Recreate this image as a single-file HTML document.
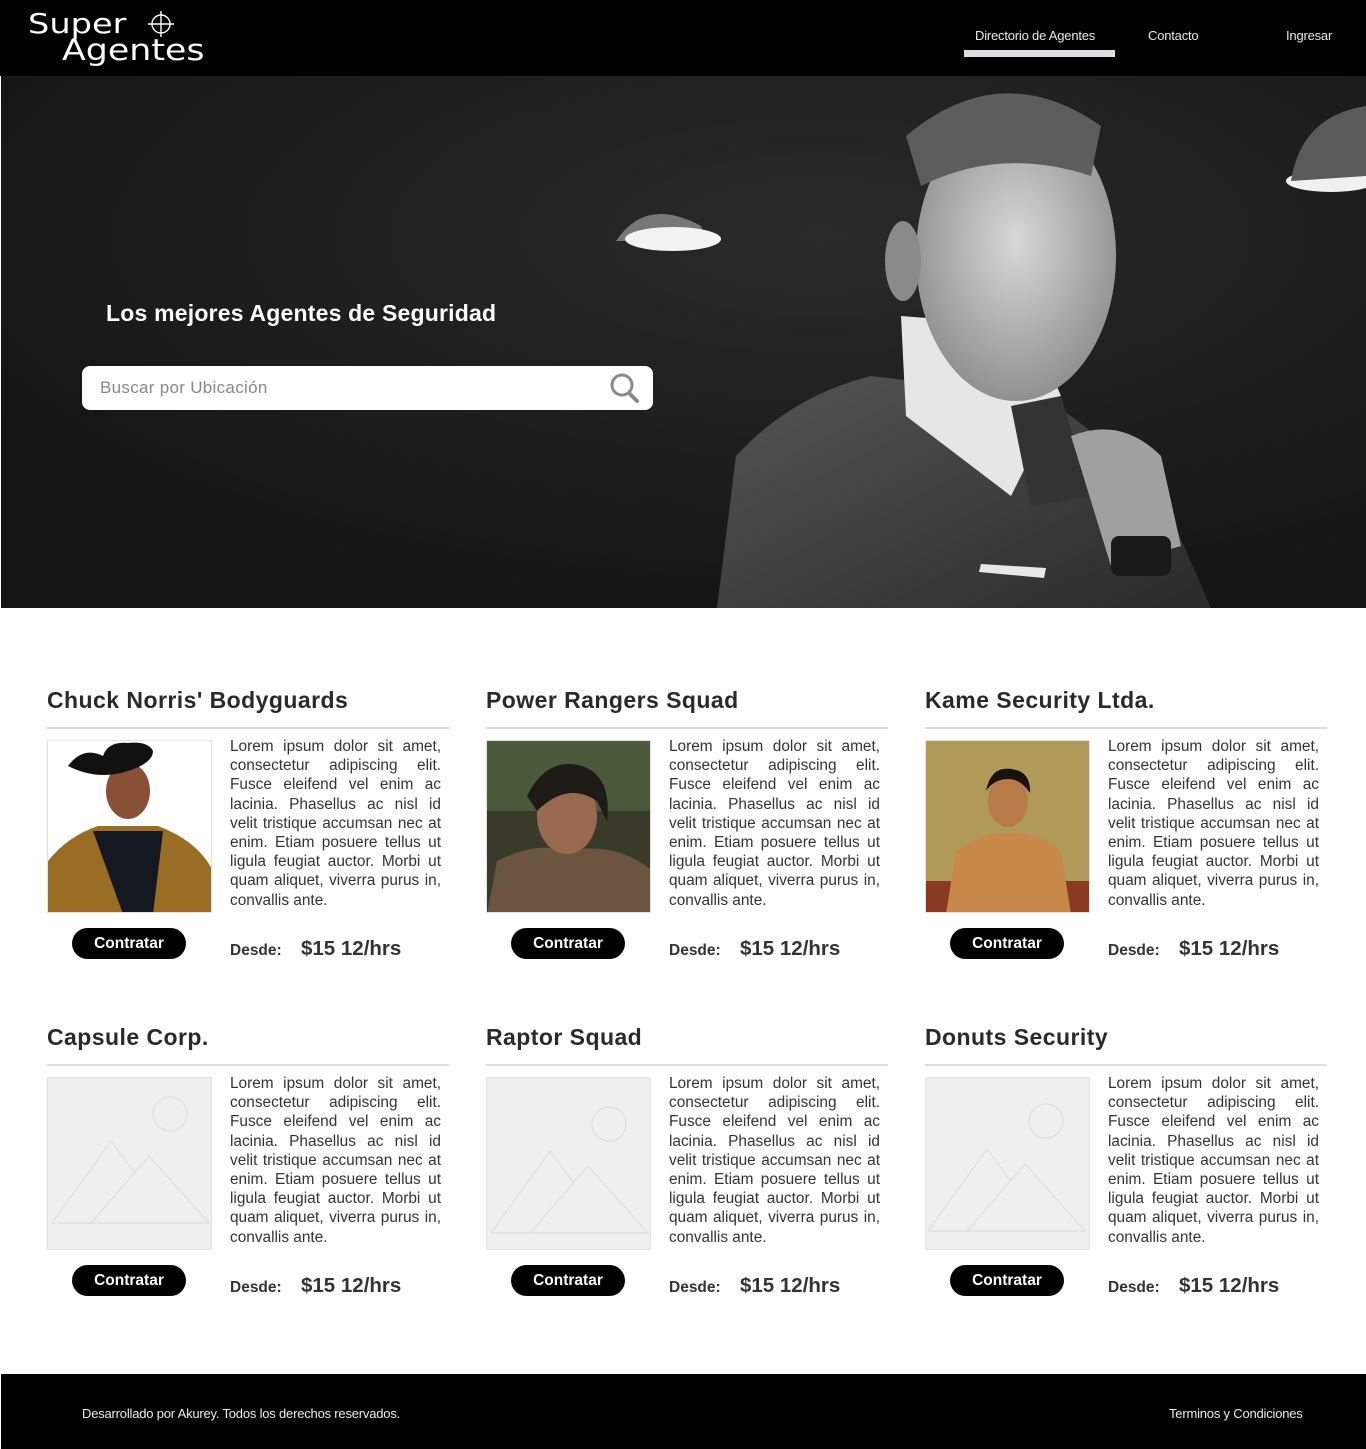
<!DOCTYPE html>
<html><head><meta charset="utf-8">
<style>
*{margin:0;padding:0;box-sizing:border-box}
body{width:1366px;height:1449px;position:relative;background:#fff;font-family:"Liberation Sans",Arial,sans-serif;overflow:hidden}
.abs{position:absolute}
.nav{left:0;top:0;width:1366px;height:76px;background:#000}
.nl{color:#e8e8e8;font-size:13px;letter-spacing:-0.2px;top:28px}
.hero{left:1px;top:76px;width:1365px;height:532px;background:#1c1c1c;overflow:hidden}
.card{width:402px;height:290px}
.card h2{position:absolute;left:0;top:6px;font-size:23px;font-weight:bold;color:#2a2a2a;letter-spacing:0.45px}
.card .rule{position:absolute;left:0;top:46px;width:402px;height:2px;background:#ddd}
.card .img{position:absolute;left:0;top:59px;width:165px;height:173px;border:1px solid #e2e2e2;overflow:hidden;background:#fff}
.card p{position:absolute;left:183px;top:56px;width:211px;font-size:15.4px;line-height:19.2px;color:#333;text-align:justify}
.card .btn{position:absolute;left:25px;top:247px;width:114px;height:31px;border-radius:16px;background:#000;color:#fff;font-weight:bold;font-size:15.5px;text-align:center;line-height:31px}
.card .d{position:absolute;left:183px;top:261px;font-size:15.5px;font-weight:bold;color:#333}
.card .pr{position:absolute;left:254px;top:256px;font-size:20.5px;font-weight:bold;color:#333}
.foot{left:1px;top:1374px;width:1365px;height:75px;background:#000;color:#eee;font-size:13px;letter-spacing:-0.2px}
.logo{color:#fff;font-family:"DejaVu Sans",sans-serif;font-weight:normal;transform-origin:0 0}
</style></head><body>
<div class="abs nav">
  <div class="abs logo" style="left:28px;top:10px;font-size:28px;line-height:28px;letter-spacing:0px;transform:scaleX(1.2)">Super</div>
  <svg class="abs" style="left:146px;top:9px" width="30" height="30" viewBox="0 0 30 30"><circle cx="15" cy="15" r="9" fill="none" stroke="#fff" stroke-width="1.4"/><path d="M15 2V28M2 15H28" stroke="#fff" stroke-width="1.4"/></svg>
  <div class="abs logo" style="left:62px;top:36px;font-size:29px;line-height:28px;letter-spacing:0px;transform:scaleX(1.2)">Agentes</div>
  <div class="abs nl" style="left:975px">Directorio de Agentes</div>
  <div class="abs" style="left:964px;top:50px;width:151px;height:7px;background:#dcdfe0"></div>
  <div class="abs nl" style="left:1148px">Contacto</div>
  <div class="abs nl" style="left:1286px">Ingresar</div>
</div>
<div class="abs hero">
  <svg width="1365" height="532" viewBox="0 0 1365 532" style="position:absolute;left:0;top:0">
    <defs>
      <radialGradient id="bg" cx="0.6" cy="0.3" r="0.7"><stop offset="0" stop-color="#2a2a2a"/><stop offset="1" stop-color="#151515"/></radialGradient>
      <radialGradient id="face" cx="0.5" cy="0.45" r="0.6"><stop offset="0" stop-color="#d8d8d8"/><stop offset="1" stop-color="#8a8a8a"/></radialGradient>
      <linearGradient id="suit" x1="0" y1="0" x2="1" y2="1"><stop offset="0" stop-color="#555"/><stop offset="1" stop-color="#2a2a2a"/></linearGradient>
    </defs>
    <rect width="1365" height="532" fill="url(#bg)"/>
    <path d="M615 165 Q645 120 700 150 L705 165 Z" fill="#777"/>
    <ellipse cx="672" cy="163" rx="48" ry="12" fill="#f2f2f2"/>
    <ellipse cx="1330" cy="105" rx="45" ry="11" fill="#f0f0f0"/>
    <path d="M1290 105 Q1300 40 1365 30 L1365 100 Z" fill="#5a5a5a"/>
    <path d="M716 532 L735 380 Q790 320 870 300 L1040 320 Q1120 370 1170 440 L1210 532 Z" fill="url(#suit)"/>
    <path d="M900 240 L905 340 L1010 420 L1060 320 L1030 250 Z" fill="#e6e6e6"/>
    <path d="M1010 330 L1060 320 L1090 420 L1030 430 Z" fill="#333"/>
    <ellipse cx="1015" cy="180" rx="100" ry="145" fill="url(#face)"/>
    <path d="M905 60 Q1000 -20 1100 50 L1090 100 Q1000 70 920 110 Z" fill="#5d5d5d"/>
    <ellipse cx="902" cy="185" rx="18" ry="40" fill="#8a8a8a"/>
    <path d="M1070 360 Q1120 340 1160 380 L1180 470 L1110 490 Z" fill="#a0a0a0"/>
    <rect x="1110" y="460" width="60" height="40" rx="8" fill="#1a1a1a"/>
    <path d="M980 488 L1045 492 L1043 502 L978 496 Z" fill="#e8e8e8"/>
  </svg>
  <div class="abs" style="left:105px;top:224px;color:#fff;font-size:23px;font-weight:bold;letter-spacing:0.2px">Los mejores Agentes de Seguridad</div>
  <div class="abs" style="left:81px;top:290px;width:571px;height:44px;background:#fff;border-radius:8px">
    <div class="abs" style="left:18px;top:12px;font-size:17px;color:#888;letter-spacing:0.3px">Buscar por Ubicación</div>
    <svg class="abs" style="left:526px;top:6px" width="34" height="32" viewBox="0 0 34 32"><circle cx="14" cy="13" r="10" fill="none" stroke="#8a8a8a" stroke-width="3"/><path d="M21 21L29 29" stroke="#8a8a8a" stroke-width="4" stroke-linecap="round"/></svg>
  </div>
</div>

<div class="abs card" style="left:47px;top:681px">
  <h2>Chuck Norris' Bodyguards</h2><div class="rule"></div>
  <div class="img"><svg width="165" height="173"><rect width="165" height="173" fill="#fff"/><path d="M0 173 L0 120 Q20 95 50 85 L110 85 Q150 100 165 130 L165 173 Z" fill="#9a6d25"/><path d="M45 90 L75 173 L105 173 L115 90 Z" fill="#141820"/><ellipse cx="80" cy="50" rx="22" ry="28" fill="#8a5036"/><path d="M20 25 Q50 40 80 30 Q105 22 105 10 Q100 0 80 2 Q60 0 55 15 Q35 5 20 25Z" fill="#111"/></svg></div>
  <p>Lorem ipsum dolor sit amet, consectetur adipiscing elit. Fusce eleifend vel enim ac lacinia. Phasellus ac nisl id velit tristique accumsan nec at enim. Etiam posuere tellus ut ligula feugiat auctor. Morbi ut quam aliquet, viverra purus in, convallis ante.</p>
  <div class="btn">Contratar</div><div class="d">Desde:</div><div class="pr">$15 12/hrs</div>
</div>
<div class="abs card" style="left:486px;top:681px">
  <h2>Power Rangers Squad</h2><div class="rule"></div>
  <div class="img"><svg width="165" height="173"><rect width="165" height="173" fill="#3a3a2a"/><rect x="0" y="0" width="165" height="70" fill="#4a5a3a"/><path d="M0 173 L10 120 Q50 100 80 110 Q130 100 165 130 L165 173Z" fill="#6b5540"/><ellipse cx="80" cy="75" rx="30" ry="38" fill="#9a6a50"/><path d="M40 55 Q60 15 95 25 Q125 35 120 80 L110 60 Q80 40 50 70Z" fill="#1e1a16"/></svg></div>
  <p>Lorem ipsum dolor sit amet, consectetur adipiscing elit. Fusce eleifend vel enim ac lacinia. Phasellus ac nisl id velit tristique accumsan nec at enim. Etiam posuere tellus ut ligula feugiat auctor. Morbi ut quam aliquet, viverra purus in, convallis ante.</p>
  <div class="btn">Contratar</div><div class="d">Desde:</div><div class="pr">$15 12/hrs</div>
</div>
<div class="abs card" style="left:925px;top:681px">
  <h2>Kame Security Ltda.</h2><div class="rule"></div>
  <div class="img"><svg width="165" height="173"><rect width="165" height="173" fill="#b09a5a"/><rect y="140" width="165" height="33" fill="#8a3a20"/><path d="M20 173 L30 110 Q60 90 82 92 Q110 90 135 110 L145 173Z" fill="#c8884a"/><ellipse cx="82" cy="60" rx="20" ry="26" fill="#b87a48"/><path d="M60 50 Q65 25 85 28 Q105 30 104 52 Q95 38 82 38 Q68 38 60 50Z" fill="#1a120c"/></svg></div>
  <p>Lorem ipsum dolor sit amet, consectetur adipiscing elit. Fusce eleifend vel enim ac lacinia. Phasellus ac nisl id velit tristique accumsan nec at enim. Etiam posuere tellus ut ligula feugiat auctor. Morbi ut quam aliquet, viverra purus in, convallis ante.</p>
  <div class="btn">Contratar</div><div class="d">Desde:</div><div class="pr">$15 12/hrs</div>
</div>

<div class="abs card" style="left:47px;top:1018px">
  <h2>Capsule Corp.</h2><div class="rule"></div>
  <div class="img"><svg width="165" height="173"><rect width="165" height="173" fill="#efefef"/><circle cx="122" cy="36" r="17" fill="none" stroke="#ddd" stroke-width="1.2"/><path d="M4 145 L63 63 L86 94 M43 145 L101 78 L161 145 Z M4 145 H43" fill="none" stroke="#ddd" stroke-width="1.2"/></svg></div>
  <p>Lorem ipsum dolor sit amet, consectetur adipiscing elit. Fusce eleifend vel enim ac lacinia. Phasellus ac nisl id velit tristique accumsan nec at enim. Etiam posuere tellus ut ligula feugiat auctor. Morbi ut quam aliquet, viverra purus in, convallis ante.</p>
  <div class="btn">Contratar</div><div class="d">Desde:</div><div class="pr">$15 12/hrs</div>
</div>
<div class="abs card" style="left:486px;top:1018px">
  <h2>Raptor Squad</h2><div class="rule"></div>
  <div class="img"><svg width="165" height="173"><rect width="165" height="173" fill="#efefef"/><circle cx="122" cy="46" r="17" fill="none" stroke="#ddd" stroke-width="1.2"/><path d="M4 155 L63 73 L86 104 M43 155 L101 88 L161 155 Z M4 155 H43" fill="none" stroke="#ddd" stroke-width="1.2"/></svg></div>
  <p>Lorem ipsum dolor sit amet, consectetur adipiscing elit. Fusce eleifend vel enim ac lacinia. Phasellus ac nisl id velit tristique accumsan nec at enim. Etiam posuere tellus ut ligula feugiat auctor. Morbi ut quam aliquet, viverra purus in, convallis ante.</p>
  <div class="btn">Contratar</div><div class="d">Desde:</div><div class="pr">$15 12/hrs</div>
</div>
<div class="abs card" style="left:925px;top:1018px">
  <h2>Donuts Security</h2><div class="rule"></div>
  <div class="img"><svg width="165" height="173"><rect width="165" height="173" fill="#efefef"/><circle cx="120" cy="43" r="17" fill="none" stroke="#ddd" stroke-width="1.2"/><path d="M2 153 L61 71 L84 102 M41 153 L99 86 L159 153 Z M2 153 H41" fill="none" stroke="#ddd" stroke-width="1.2"/></svg></div>
  <p>Lorem ipsum dolor sit amet, consectetur adipiscing elit. Fusce eleifend vel enim ac lacinia. Phasellus ac nisl id velit tristique accumsan nec at enim. Etiam posuere tellus ut ligula feugiat auctor. Morbi ut quam aliquet, viverra purus in, convallis ante.</p>
  <div class="btn">Contratar</div><div class="d">Desde:</div><div class="pr">$15 12/hrs</div>
</div>

<div class="abs foot">
  <div class="abs" style="left:81px;top:32px">Desarrollado por Akurey. Todos los derechos reservados.</div>
  <div class="abs" style="left:1168px;top:32px">Terminos y Condiciones</div>
</div>
</body></html>
